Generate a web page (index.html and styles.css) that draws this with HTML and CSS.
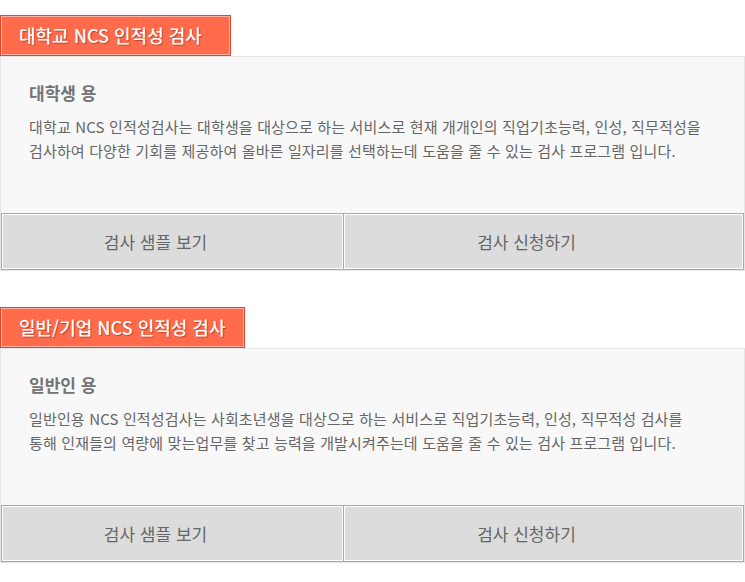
FILE: index.html
```html
<!DOCTYPE html>
<html lang="ko">
<head>
    <meta charset="UTF-8">
    <title>NCS 인적성 검사</title>
    <link rel="stylesheet" href="styles.css">
</head>
<body>
    <div class="test-list">
        <div class="test-section">
            <div class="test-tab">대학교 NCS 인적성 검사</div>
            <div class="test-box">
                <div class="test-body">
                    <h3>대학생 용</h3>
                    <p>대학교 NCS 인적성검사는 대학생을 대상으로 하는 서비스로 현재 개개인의 직업기초능력, 인성, 직무적성을<br>검사하여 다양한 기회를 제공하여 올바른 일자리를 선택하는데 도움을 줄 수 있는 검사 프로그램 입니다.</p>
                </div>
                <div class="test-buttons">
                    <button>검사 샘플 보기</button>
                    <button>검사 신청하기</button>
                </div>
            </div>
        </div>

        <div class="test-section">
            <div class="test-tab">일반/기업 NCS 인적성 검사</div>
            <div class="test-box">
                <div class="test-body">
                    <h3>일반인 용</h3>
                    <p>일반인용 NCS 인적성검사는 사회초년생을 대상으로 하는 서비스로 직업기초능력, 인성, 직무적성 검사를<br>통해 인재들의 역량에 맞는업무를 찾고 능력을 개발시켜주는데 도움을 줄 수 있는 검사 프로그램 입니다.</p>
                </div>
                <div class="test-buttons">
                    <button>검사 샘플 보기</button>
                    <button>검사 신청하기</button>
                </div>
            </div>
        </div>
    </div>
</body>
</html>
```

FILE: styles.css
```css
body {
    margin: 0;
    background-color: #fff;
    font-family: "Noto Sans CJK KR", "Noto Sans", sans-serif;
    color: #666;
}

.test-list {
    width: 745px;
    padding-top: 15px;
}

.test-section {
    margin-bottom: 36px;
}

.test-tab {
    display: inline-block;
    min-width: 231px;
    height: 41px;
    line-height: 39px;
    padding: 0 18px;
    box-sizing: border-box;
    background-color: #ff6b4b;
    border: 1px solid #d64a2e;
    box-shadow: inset 0 0 0 1px #fab0a0;
    color: #fff;
    font-size: 18px;
    font-weight: 500;
    text-shadow: 1px 1px 1px rgba(120, 30, 10, 0.5);
}

.test-box {
    width: 745px;
    box-sizing: border-box;
    border: 1px solid #e6e6e6;
    background-color: #f8f8f8;
}

.test-body {
    height: 156px;
    box-sizing: border-box;
    padding: 23px 28px 0 28px;
}

    .test-body h3 {
        margin: 0 0 9px 0;
        font-size: 17px;
        font-weight: 700;
        line-height: 26px;
        color: #747474;
    }

    .test-body p {
        margin: 0;
        font-size: 15px;
        line-height: 24px;
        letter-spacing: 0.15px;
        color: #666;
    }

.test-buttons {
    display: flex;
}

    .test-buttons button {
        height: 57px;
        margin: 0;
        padding: 0 34px 0 0;
        border: 1px solid #a8a8a8;
        box-shadow: inset 0 0 0 1px #fff;
        background-color: #dcdcdc;
        font-family: "Noto Sans CJK KR", "Noto Sans", sans-serif;
        font-size: 17px;
        color: #666;
        cursor: pointer;
    }

        .test-buttons button:first-child {
            width: 343px;
        }

        .test-buttons button:last-child {
            flex: 1;
            border-left: none;
        }
```
